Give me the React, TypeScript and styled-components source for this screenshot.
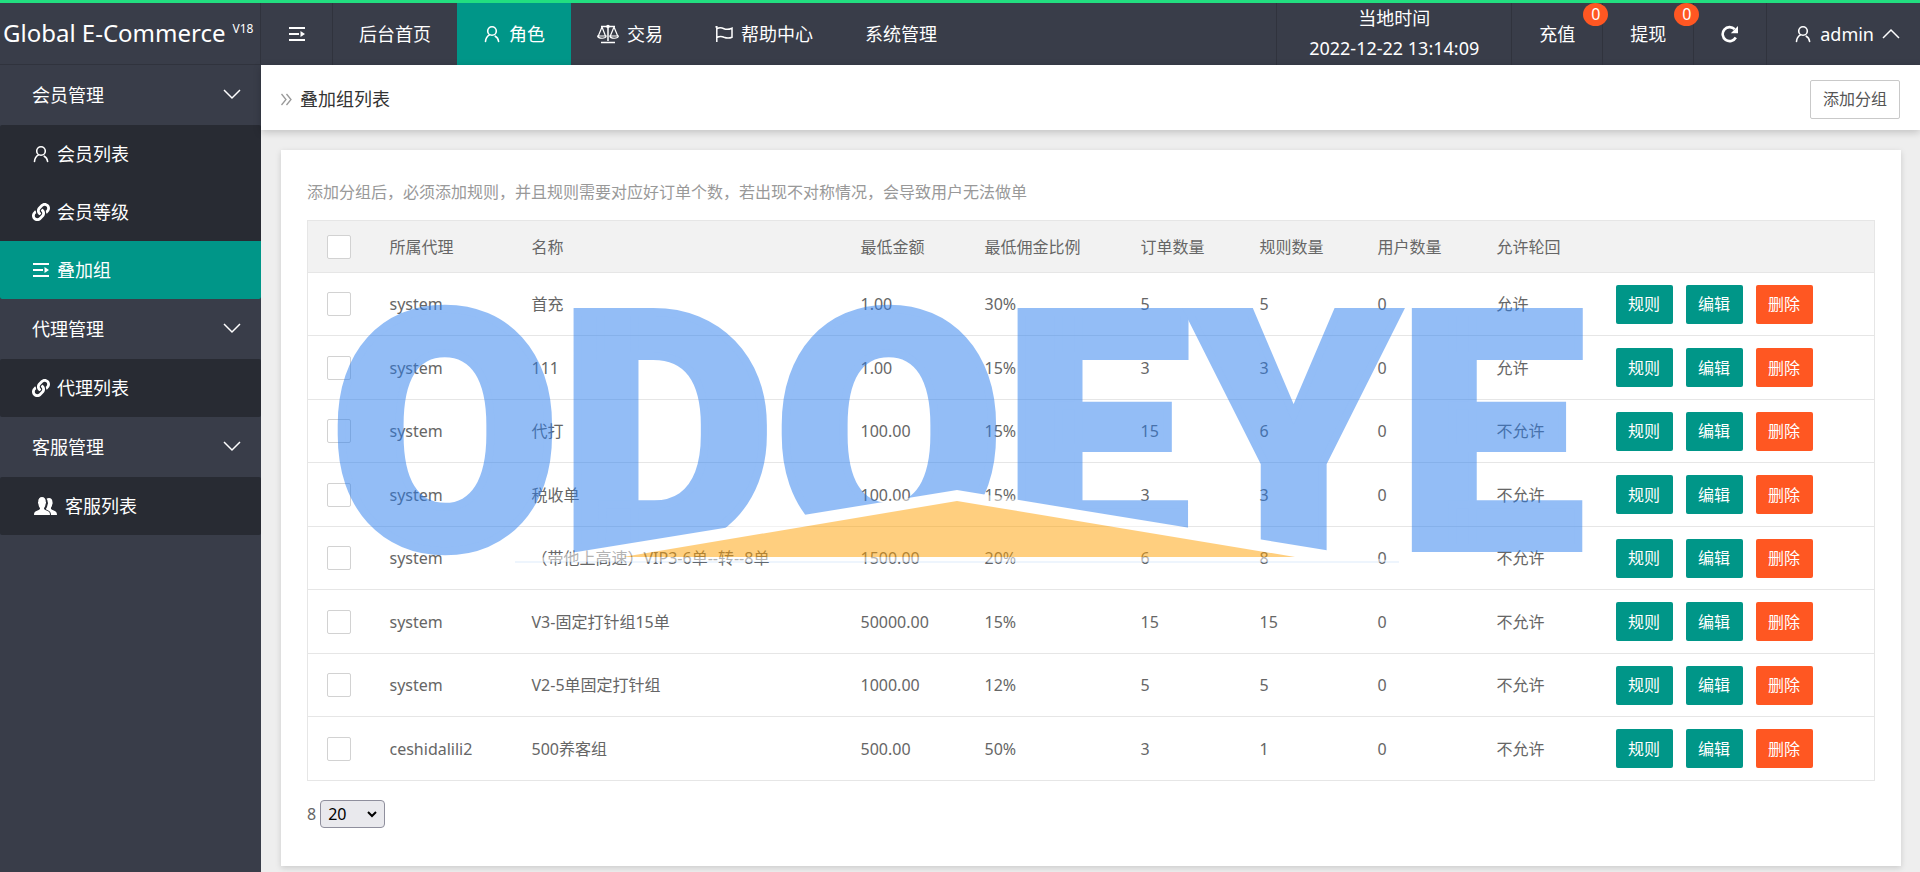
import React from "react";
import styled, { createGlobalStyle } from "styled-components";
import { FaLink } from "react-icons/fa";

const GlobalStyle = createGlobalStyle`
  * { box-sizing: border-box; }
  body {
    margin: 0;
    background: #eee;
    color: #666;
    font: 16px/24px "Noto Sans", "Noto Sans CJK SC", sans-serif;
  }
  a { color: inherit; text-decoration: none; }
  button, select { font: inherit; }
  svg { display: block; flex: none; }
`;

const Page = styled.div`
  display: flex;
  flex-direction: column;
  min-height: 100vh;
`;

const Header = styled.header`
  display: flex;
  height: 65px;
  border-top: 3px solid #22de80;
  background: #393d49;
  color: #fff;
  font-size: 18px;
`;

const Brand = styled.h1`
  display: flex;
  align-items: center;
  gap: 7px;
  width: 261px;
  margin: 0;
  padding: 0 0 2px 3px;
  border-right: 1px solid #30333d;
  border-bottom: 1px solid #30333d;
  font-size: 24px;
  font-weight: 400;
  line-height: 32px;
  white-space: nowrap;
`;

const Version = styled.sup`
  align-self: flex-start;
  padding-top: 14px;
  font-size: 12px;
  line-height: 24px;
`;

const NavGroup = styled.nav`
  display: flex;
`;

const NavLink = styled.a<{ $active?: boolean; $ruled?: boolean }>`
  display: flex;
  align-items: center;
  gap: 8px;
  padding: ${(p) => (p.$ruled ? "0 26px 0 27px" : "0 26px")};
  background: ${(p) => (p.$active ? "#009688" : "transparent")};
  border-right: ${(p) => (p.$ruled ? "1px solid #30333d" : "0")};
`;

const HeaderTools = styled.div`
  display: flex;
  margin-left: auto;
`;

const ToolLink = styled.a`
  position: relative;
  display: flex;
  align-items: center;
  gap: 8px;
  padding: 0 27px;
  border-left: 1px solid #30333d;
  &:last-child { padding-right: 20px; }
`;

const Clock = styled.div`
  width: 235px;
  border-left: 1px solid #30333d;
  line-height: 30px;
  text-align: center;
`;

const Badge = styled.span`
  position: absolute;
  top: 0;
  right: -6px;
  z-index: 1;
  width: 25px;
  height: 23px;
  border-radius: 50%;
  background: #ff5722;
  font-size: 16px;
  line-height: 23px;
  text-align: center;
`;

const Body = styled.div`
  display: flex;
  flex: 1;
`;

const Sidebar = styled.aside`
  flex: none;
  width: 261px;
  background: #393d49;
  color: #fff;
  font-size: 18px;
`;

const GroupButton = styled.button`
  display: flex;
  align-items: center;
  justify-content: space-between;
  width: 100%;
  height: 60px;
  padding: 0 20px 0 32px;
  border: 0;
  background: none;
  color: inherit;
`;

const SubMenu = styled.div`
  overflow: hidden;
  border-radius: 2px;
  background: #282b33;
`;

const SubLink = styled.a<{ $active?: boolean }>`
  display: flex;
  align-items: center;
  gap: 7px;
  height: 58px;
  padding-left: 32px;
  background: ${(p) => (p.$active ? "#009688" : "transparent")};
`;

const Main = styled.main`
  flex: 1;
  min-width: 0;
`;

const TitleBar = styled.div`
  display: flex;
  align-items: center;
  justify-content: space-between;
  height: 65px;
  padding: 3px 20px 0;
  background: #fff;
  box-shadow: 0 2px 8px rgba(0, 0, 0, 0.2);
`;

const Title = styled.h2`
  display: flex;
  align-items: center;
  gap: 8px;
  margin: 0;
  color: #333;
  font-size: 18px;
  font-weight: 400;
`;

const OutlineButton = styled.button`
  height: 39px;
  padding: 0 12px;
  border: 1px solid #c9c9c9;
  border-radius: 2px;
  background: #fff;
  color: #555;
`;

const Card = styled.section`
  margin: 20px 19px 0 20px;
  padding: 30px 26px 38px;
  background: #fff;
  box-shadow: 0 2px 6px rgba(0, 0, 0, 0.15);
`;

const Hint = styled.p`
  margin: 0 0 16px;
  color: #999;
`;

const Table = styled.table`
  width: 100%;
  border: 1px solid #e6e6e6;
  border-collapse: collapse;
  table-layout: fixed;
  text-align: left;
`;

const Col = styled.col<{ $w?: number }>`
  width: ${(p) => (p.$w ? p.$w + "px" : "auto")};
`;

const HeadRow = styled.tr`
  height: 52px;
  background: #f2f2f2;
`;

const Row = styled.tr`
  height: 63px;
  border-top: 1px solid #e6e6e6;
  &:nth-child(even) { height: 64px; }
`;

const Th = styled.th`
  padding: 0 19px;
  font-weight: 400;
  white-space: nowrap;
`;

const Td = styled.td`
  padding: 0 19px;
  white-space: nowrap;
`;

const Tick = styled.input`
  display: block;
  width: 24px;
  height: 24px;
  margin: 0;
  border: 1px solid #d2d2d2;
  border-radius: 2px;
  background: #fff;
  appearance: none;
  &:checked { background: #009688; }
`;

const Actions = styled.div`
  display: flex;
  gap: 13px;
`;

const ActionButton = styled.button<{ $danger?: boolean }>`
  width: 57px;
  height: 39px;
  padding: 0;
  border: 0;
  border-radius: 2px;
  background: ${(p) => (p.$danger ? "#ff5722" : "#009688")};
  color: #fff;
`;

const Pager = styled.label`
  display: flex;
  align-items: center;
  gap: 4px;
  margin-top: 19px;
`;

const SelectWrap = styled.span`
  position: relative;
  svg {
    position: absolute;
    top: 11px;
    right: 8px;
    pointer-events: none;
  }
`;

const Select = styled.select`
  display: block;
  width: 65px;
  height: 28px;
  padding: 0 7px;
  border: 1px solid #8f8f9d;
  border-radius: 4px;
  background: #e9e9ed;
  color: #000;
  appearance: none;
`;

const Watermark = styled.div`
  position: absolute;
  inset: 0;
  display: flex;
  align-items: center;
  justify-content: center;
  overflow: hidden;
  opacity: 0.5;
  pointer-events: none;
`;

const WatermarkText = styled.text`
  font-family: Roboto, sans-serif;
  font-size: 332px;
  font-weight: 900;
  fill: #297def;
  stroke: #297def;
  stroke-width: 8px;
`;

const MenuIcon = () => (
  <svg width="18" height="16" viewBox="0 0 18 16" fill="currentColor">
    <path d="M1 1h16v2H1zM1 7h10v2H1zM1 13h16v2H1zM12.5 5 17 8l-4.500 3z" />
  </svg>
);

const UserIcon = () => (
  <svg width="18" height="18" viewBox="0 0 18 18" fill="none" stroke="currentColor" strokeWidth="1.600" strokeLinecap="round">
    <circle cx="9" cy="6" r="4.300" />
    <path d="M2.500 16.500C2.700 13.500 4 11.300 6.500 9.900M12.200 11.200C14.300 12.300 15.300 14.100 15.600 16.500" />
  </svg>
);

const ScaleIcon = () => (
  <svg width="22" height="20" viewBox="0 0 22 20" fill="none" stroke="currentColor" strokeWidth="1.200">
    <path d="M4 2.500h14M11 1v16M4 18.500h14" strokeWidth="1.500" />
    <circle cx="11" cy="2.500" r="1.200" fill="currentColor" />
    <path d="M5 3 1.300 12M5 3l3.500 9M.600 12h8.600c-.400 3-7.800 3-8.600 0zM17 3l-3.700 9M17 3l3.700 9M12.800 12h8.600c-.400 3-7.800 3-8.600 0z" />
  </svg>
);

const FlagIcon = () => (
  <svg width="18" height="18" viewBox="0 0 18 18" fill="none" stroke="currentColor" strokeWidth="1.500">
    <path d="M1.800 1v16M.500 1.500l1.300 1M1.800 4c2.700-2 4.700-1.500 7.200-.300 2.500 1.200 5 .800 8-.500v9c-3 1.300-5.500 1-8 0-2.500-1.200-4.500-1.200-7.200.300" />
  </svg>
);

const RefreshIcon = () => (
  <svg width="18" height="18" viewBox="0 0 18 18" fill="none" stroke="currentColor" strokeWidth="2.600">
    <path d="M14.800 12.500A7 7 0 1 1 13.700 4.200" />
    <path d="M17 1v7.200H9.800z" fill="currentColor" stroke="none" />
  </svg>
);

const Chevron = ({ up }: { up?: boolean }) => (
  <svg width="18" height="12" viewBox="0 0 18 12" fill="none" stroke="currentColor" strokeWidth="1.500">
    <path d={up ? "M1 10 9 2l8 8" : "M1 1l8 8 8-8"} />
  </svg>
);

const PeopleIcon = () => (
  <svg width="26" height="20" viewBox="0 0 26 20" fill="currentColor">
    <path d="M2 19c0-3 1-3.700 3.500-4.600C7.500 13.700 8 13.300 8 12 7 11 6.600 9.500 6.400 8 5.800 7 5.900 6.200 6.300 5.800 6 3 7.500 1 10 1s4 2 3.700 4.800c.400.400.500 1.200-.100 2.200-.200 1.500-.600 3-1.600 4 0 1.300.500 1.700 2.500 2.400C17 15.300 18 16 18 19z" />
    <path d="M14.500 2.800C15.200 2.200 16 2 17 2c2.300 0 3.700 1.800 3.400 4.300.400.400.400 1.200-.100 2-.200 1.400-.600 2.600-1.400 3.500 0 1.300.300 1.700 2.300 2.500 2.300.9 3.800 1.700 3.800 4.700h-6c0-2.500-.800-4-3.700-5.100-1-.400-1.300-.600-1.300-1.200 1-1.100 1.300-2.500 1.500-3.900.600-1 .600-2 .100-3 .100-1.200-.300-2.200-1.100-3z" />
  </svg>
);

const RaquoIcon = () => (
  <svg width="11" height="14" viewBox="0 0 11 14" fill="none" stroke="#999" strokeWidth="1.300">
    <path d="M.500 2 5 7.500.500 13M5.500 2 10 7.500 5.500 13" />
  </svg>
);

const SelectArrow = () => (
  <svg width="10" height="8" viewBox="0 0 10 8" fill="none" stroke="#000" strokeWidth="2">
    <path d="M1 1l4 4 4-4" />
  </svg>
);

const menu = [
  {
    title: "会员管理",
    items: [
      { label: "会员列表", icon: <UserIcon /> },
      { label: "会员等级", icon: <FaLink size={18} /> },
      { label: "叠加组", icon: <MenuIcon />, active: true },
    ],
  },
  { title: "代理管理", items: [{ label: "代理列表", icon: <FaLink size={18} /> }] },
  { title: "客服管理", items: [{ label: "客服列表", icon: <PeopleIcon /> }] },
];

const columns: { label: string; width?: number }[] = [
  { label: "所属代理", width: 142 },
  { label: "名称" },
  { label: "最低金额", width: 124 },
  { label: "最低佣金比例", width: 156 },
  { label: "订单数量", width: 119 },
  { label: "规则数量", width: 118 },
  { label: "用户数量", width: 119 },
  { label: "允许轮回", width: 119 },
];

const rows = [
  ["system", "首充", "1.00", "30%", "5", "5", "0", "允许"],
  ["system", "111", "1.00", "15%", "3", "3", "0", "允许"],
  ["system", "代打", "100.00", "15%", "15", "6", "0", "不允许"],
  ["system", "税收单", "100.00", "15%", "3", "3", "0", "不允许"],
  ["system", "（带他上高速）VIP3-6单--转--8单", "1500.00", "20%", "6", "8", "0", "不允许"],
  ["system", "V3-固定打针组15单", "50000.00", "15%", "15", "15", "0", "不允许"],
  ["system", "V2-5单固定打针组", "1000.00", "12%", "5", "5", "0", "不允许"],
  ["ceshidalili2", "500养客组", "500.00", "50%", "3", "1", "0", "不允许"],
];

export default function App() {
  return (
    <Page>
      <GlobalStyle />
      <Header>
        <Brand>
          Global E-Commerce<Version>V18</Version>
        </Brand>
        <NavGroup>
          <NavLink href="#" $ruled aria-label="收起菜单"><MenuIcon /></NavLink>
          <NavLink href="#">后台首页</NavLink>
          <NavLink href="#" $active><UserIcon />角色</NavLink>
          <NavLink href="#"><ScaleIcon />交易</NavLink>
          <NavLink href="#"><FlagIcon />帮助中心</NavLink>
          <NavLink href="#">系统管理</NavLink>
        </NavGroup>
        <HeaderTools>
          <Clock>
            <div>当地时间</div>
            <time dateTime="2022-12-22T13:14:09">2022-12-22 13:14:09</time>
          </Clock>
          <ToolLink href="#">充值<Badge>0</Badge></ToolLink>
          <ToolLink href="#">提现<Badge>0</Badge></ToolLink>
          <ToolLink href="#" aria-label="刷新"><RefreshIcon /></ToolLink>
          <ToolLink href="#"><UserIcon />admin<Chevron up /></ToolLink>
        </HeaderTools>
      </Header>
      <Body>
        <Sidebar>
          {menu.map((group) => (
            <div key={group.title}>
              <GroupButton type="button">{group.title}<Chevron /></GroupButton>
              <SubMenu>
                {group.items.map((item) => (
                  <SubLink key={item.label} href="#" $active={"active" in item}>
                    {item.icon}{item.label}
                  </SubLink>
                ))}
              </SubMenu>
            </div>
          ))}
        </Sidebar>
        <Main>
          <TitleBar>
            <Title><RaquoIcon />叠加组列表</Title>
            <OutlineButton type="button">添加分组</OutlineButton>
          </TitleBar>
          <Card>
            <Hint>添加分组后，必须添加规则，并且规则需要对应好订单个数，若出现不对称情况，会导致用户无法做单</Hint>
            <Table>
              <colgroup>
                <Col $w={63} />
                {columns.map((c) => <Col key={c.label} $w={c.width} />)}
                <Col $w={278} />
              </colgroup>
              <thead>
                <HeadRow>
                  <Th><Tick type="checkbox" aria-label="全选" /></Th>
                  {columns.map((c) => <Th key={c.label} scope="col">{c.label}</Th>)}
                  <Th />
                </HeadRow>
              </thead>
              <tbody>
                {rows.map((row, i) => (
                  <Row key={i}>
                    <Td><Tick type="checkbox" aria-label={row[1]} /></Td>
                    {row.map((cell, j) => <Td key={j}>{cell}</Td>)}
                    <Td>
                      <Actions>
                        <ActionButton type="button">规则</ActionButton>
                        <ActionButton type="button">编辑</ActionButton>
                        <ActionButton type="button" $danger>删除</ActionButton>
                      </Actions>
                    </Td>
                  </Row>
                ))}
              </tbody>
            </Table>
            <Pager>
              8
              <SelectWrap>
                <Select defaultValue="20">
                  <option>20</option>
                  <option>50</option>
                  <option>100</option>
                </Select>
                <SelectArrow />
              </SelectWrap>
            </Pager>
          </Card>
        </Main>
      </Body>
      <Watermark>
        <svg width="1300" height="270" viewBox="-30 0 1300 270">
          <WatermarkText x="617" y="247" textAnchor="middle">ODOEYE</WatermarkText>
          <path d="M175 261 617 189l442 72z" fill="#fff" />
          <path d="M283 256 617 200l338 56z" fill="#ffa101" />
          <path d="M175 261h884" stroke="#297def" strokeOpacity="0.300" />
        </svg>
      </Watermark>
    </Page>
  );
}
